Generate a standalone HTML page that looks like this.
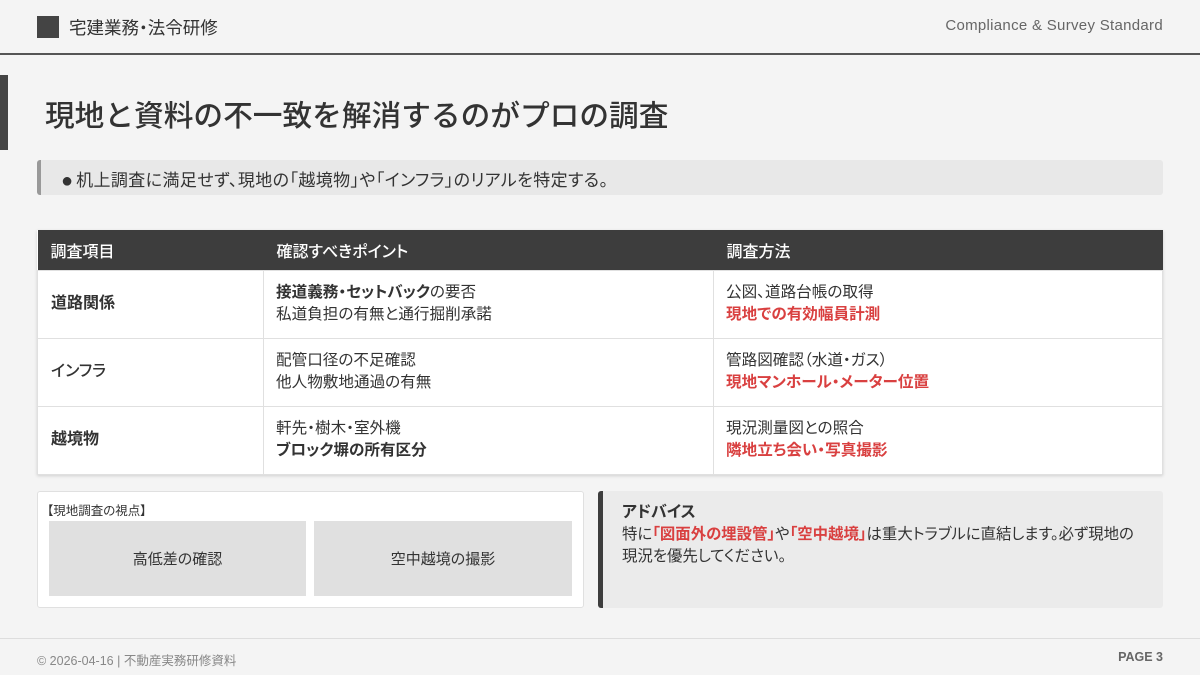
<!DOCTYPE html>
<html><head><meta charset="utf-8"><style>
*{margin:0;padding:0;box-sizing:border-box}
body{width:1200px;height:675px;background:#f4f4f4;font-family:"Liberation Sans","Noto Sans CJK JP",sans-serif;color:#333;position:relative;overflow:hidden;font-feature-settings:"palt"}
.abs{position:absolute}
.hdr-sq{left:37px;top:16px;width:22px;height:22px;background:#444}
.hdr-t{left:69px;top:15px;font-size:17.5px;color:#333}
.hdr-r{right:37px;top:17px;font-size:15px;color:#666;letter-spacing:.3px}
.hline{left:0;top:53px;width:1200px;height:2px;background:#555}
.tbar{left:0;top:75px;width:8px;height:75px;background:#444}
.title{left:45px;top:92px;font-size:29.7px;color:#333;font-weight:500;font-feature-settings:normal}
.sub{left:37px;top:160px;width:1126px;height:35px;background:#e8e8e8;border-left:4px solid #999;border-radius:3px;font-size:17px;padding:6px 0 0 20px;color:#333}
.sub .dot{font-size:20px;line-height:17px;vertical-align:-1px;margin-right:3px}
.sub .t{letter-spacing:.4px}
table{position:absolute;left:37px;top:230px;width:1126px;border-collapse:collapse;background:#fff;box-shadow:0 1px 3px rgba(0,0,0,.15)}
th{background:#3d3d3d;color:#fff;font-weight:500;font-size:16px;text-align:left;height:40px;padding-left:13px}
td{border:1px solid #e0e0e0;font-size:15.6px;line-height:22px;padding-left:12px;height:68px;vertical-align:middle}
td.k{font-weight:bold;font-size:16px;padding-left:13px}
.b{font-weight:bold}
.r{color:#d94040;font-weight:bold}
.lbox{left:37px;top:491px;width:547px;height:117px;background:#fff;border:1px solid #e0e0e0;border-radius:3px}
.lbl{left:47px;top:500px;font-size:12.5px;color:#333}
.ib{top:521px;height:75px;background:#e0e0e0;font-size:15px;display:flex;align-items:center;justify-content:center;color:#333}
.rbox{left:598px;top:491px;width:565px;height:117px;background:#ebebeb;border-left:5px solid #3d3d3d;border-radius:3px;padding:7px 0 0 19px}
.rbox h4{font-size:16px;font-weight:bold;margin-bottom:2px}
.rbox p{font-size:15.4px;line-height:22px}
.fline{left:0;top:638px;width:1200px;height:1px;background:#ddd}
.fl{left:37px;top:650px;font-size:12.5px;color:#888}
.fr{right:37px;top:650px;font-size:12.5px;color:#666;font-weight:bold}
</style></head><body>
<div class="abs hdr-sq"></div><div class="abs hdr-t">宅建業務・法令研修</div>
<div class="abs hdr-r">Compliance &amp; Survey Standard</div>
<div class="abs hline"></div>
<div class="abs tbar"></div>
<div class="abs title">現地と資料の不一致を解消するのがプロの調査</div>
<div class="abs sub"><span class="dot">●</span><span class="t">机上調査に満足せず、現地の「越境物」や「インフラ」のリアルを特定する。</span></div>
<table>
<tr><th style="width:226px">調査項目</th><th style="width:450px">確認すべきポイント</th><th>調査方法</th></tr>
<tr><td class="k">道路関係</td><td><span class="b">接道義務・セットバック</span>の要否<br>私道負担の有無と通行掘削承諾</td><td>公図、道路台帳の取得<br><span class="r">現地での有効幅員計測</span></td></tr>
<tr><td class="k" style="font-weight:500">インフラ</td><td>配管口径の不足確認<br>他人物敷地通過の有無</td><td>管路図確認（水道・ガス）<br><span class="r">現地マンホール・メーター位置</span></td></tr>
<tr><td class="k">越境物</td><td>軒先・樹木・室外機<br><span class="b">ブロック塀の所有区分</span></td><td>現況測量図との照合<br><span class="r">隣地立ち会い・写真撮影</span></td></tr>
</table>
<div class="abs lbox"></div>
<div class="abs lbl">【現地調査の視点】</div>
<div class="abs ib" style="left:49px;width:257px">高低差の確認</div>
<div class="abs ib" style="left:314px;width:258px">空中越境の撮影</div>
<div class="abs rbox"><h4>アドバイス</h4><p>特に<span class="r">「図面外の埋設管」</span>や<span class="r">「空中越境」</span>は重大トラブルに直結します。必ず現地の<br>現況を優先してください。</p></div>
<div class="abs fline"></div>
<div class="abs fl">© 2026-04-16 | 不動産実務研修資料</div>
<div class="abs fr">PAGE 3</div>
</body></html>
